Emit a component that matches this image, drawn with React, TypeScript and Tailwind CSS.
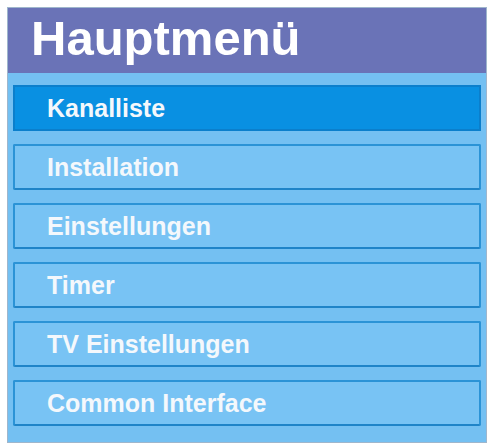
const items = [
  'Kanalliste',
  'Installation',
  'Einstellungen',
  'Timer',
  'TV Einstellungen',
  'Common Interface',
];

export default function App() {
  return (
    <div className="h-[448px] w-[490px] bg-white p-[7px] font-['Liberation_Sans',Arial,sans-serif]">
      <div className="flex h-[436px] w-[480px] flex-col border border-[#9fb6cc] bg-[#74c0f2]">
        <div className="flex h-[65px] items-center bg-[#6a73b7] pb-[5px] pl-[23px]">
          <span className="text-[49px] leading-none font-bold text-white">Hauptmenü</span>
        </div>
        <div className="flex flex-col gap-[13px] px-[5px] pt-[12px]">
          {items.map((item, i) => (
            <div
              key={item}
              className={
                i === 0
                  ? 'flex h-[46px] items-center border-2 border-[#0b7fcc] bg-[#0990e2] pl-[32px]'
                  : 'flex h-[46px] items-center rounded-[2px] border-2 border-[#2b93d6] border-b-[#1f84c8] bg-[#78c3f4] pl-[32px]'
              }
            >
              <span className="text-[25px] leading-none font-bold text-[#f4f8fc]">{item}</span>
            </div>
          ))}
        </div>
      </div>
    </div>
  );
}
